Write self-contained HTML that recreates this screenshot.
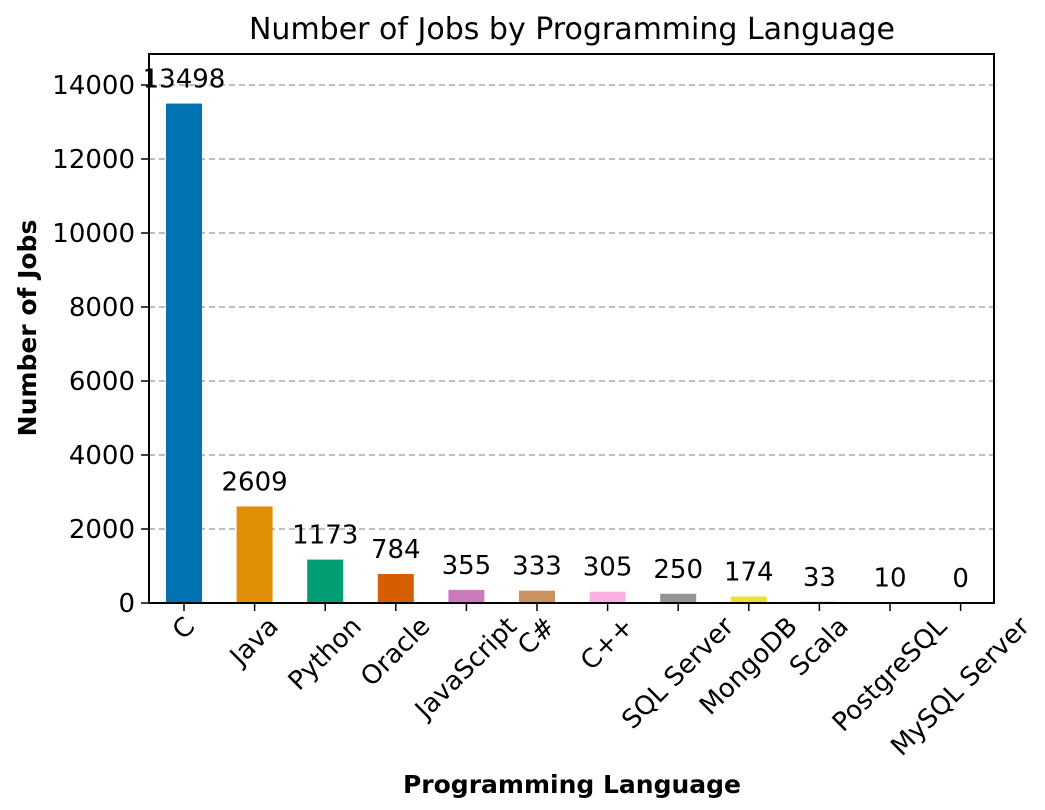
<!DOCTYPE html>
<html><head><meta charset="utf-8"><style>
html,body{margin:0;padding:0;background:#fff;}
svg{display:block;font-family:"DejaVu Sans","Liberation Sans",sans-serif;}
</style></head><body>
<svg id="s" width="1045" height="810" viewBox="0 0 1045 810" xmlns="http://www.w3.org/2000/svg">
<rect width="1045" height="810" fill="#fff"/>
<text x="572" y="39" font-size="30" text-anchor="middle">Number of Jobs by Programming Language</text>
<g id="grid"></g>
<g id="bars"></g>
<rect x="149" y="54" width="845" height="549" fill="none" stroke="#000" stroke-width="2"/>
<g id="ticks"></g>
<text x="572" y="793" font-size="25" font-weight="bold" text-anchor="middle">Programming Language</text>
<text transform="translate(36,328) rotate(-90)" font-size="25" font-weight="bold" text-anchor="middle">Number of Jobs</text>
</svg>
<script>
var NS="http://www.w3.org/2000/svg",s=document.getElementById('s');
function el(p,t,a,txt){var e=document.createElementNS(NS,t);for(var k in a)e.setAttribute(k,a[k]);if(txt!=null)e.textContent=txt;document.getElementById(p).appendChild(e);return e;}
var sc=0.037,y0=603;
for(var v=0;v<=14000;v+=2000){var y=y0-v*sc;
 if(v>0)el('grid','line',{x1:149,x2:994,y1:y,y2:y,stroke:'#a8a8a8','stroke-width':1.5,'stroke-dasharray':'6,4'});
 el('ticks','line',{x1:141,x2:149,y1:y,y2:y,stroke:'#000','stroke-width':1.5});
 el('ticks','text',{x:135,y:y+9,'font-size':26,'text-anchor':'end'},String(v));}
var d=[["C",13498,"#0173b2"],["Java",2609,"#de8f05"],["Python",1173,"#029e73"],["Oracle",784,"#d55e00"],["JavaScript",355,"#cc78bc"],["C#",333,"#ca9161"],["C++",305,"#fbafe4"],["SQL Server",250,"#949494"],["MongoDB",174,"#ece133"],["Scala",33,"#56b4e9"],["PostgreSQL",10,"#0173b2"],["MySQL Server",0,"#de8f05"]];
d.forEach(function(r,i){var cx=184+i*70.6,h=r[1]*sc,top=y0-h;
 if(h>0)el('bars','rect',{x:cx-18,y:top,width:36,height:h,fill:r[2]});
 el('ticks','text',{x:cx,y:top-16,'font-size':26,'text-anchor':'middle'},String(r[1]));
 el('ticks','line',{x1:cx,x2:cx,y1:603,y2:611,stroke:'#000','stroke-width':1.5});
 var t=el('ticks','text',{x:0,y:0,'font-size':26,'text-anchor':'middle','dominant-baseline':'central'},r[0]);
 var w=t.getComputedTextLength(),hh=26,side=(w+hh)/Math.SQRT2,cy=613+side/2;
 t.setAttribute('transform','translate('+cx+','+cy+') rotate(-45)');
});
</script>
</body></html>
